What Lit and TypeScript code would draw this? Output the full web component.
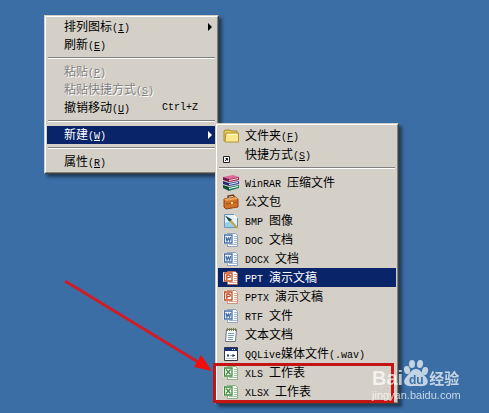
import { LitElement, html, css, svg, nothing } from "lit";
import { customElement } from "lit/decorators.js";
import { classMap } from "lit/directives/class-map.js";

interface Item {
  text: string;
  key?: string;
  shortcut?: string;
  icon?: string;
  disabled?: boolean;
  submenu?: boolean;
  selected?: boolean;
}
type Entry = Item | null;

const contextMenu: Entry[] = [
  { text: "排列图标", key: "I", submenu: true },
  { text: "刷新", key: "E" },
  null,
  { text: "粘贴", key: "P", disabled: true },
  { text: "粘贴快捷方式", key: "S", disabled: true },
  { text: "撤销移动", key: "U", shortcut: "Ctrl+Z" },
  null,
  { text: "新建", key: "W", submenu: true, selected: true },
  null,
  { text: "属性", key: "R" },
];

const newMenu: Entry[] = [
  { text: "文件夹", key: "F", icon: "folder" },
  { text: "快捷方式", key: "S", icon: "shortcut" },
  null,
  { text: "WinRAR 压缩文件", icon: "rar" },
  { text: "公文包", icon: "case" },
  { text: "BMP 图像", icon: "bmp" },
  { text: "DOC 文档", icon: "word" },
  { text: "DOCX 文档", icon: "word" },
  { text: "PPT 演示文稿", icon: "ppt", selected: true },
  { text: "PPTX 演示文稿", icon: "ppt" },
  { text: "RTF 文件", icon: "word" },
  { text: "文本文档", icon: "text" },
  { text: "QQLive媒体文件(.wav)", icon: "wav" },
  { text: "XLS 工作表", icon: "excel" },
  { text: "XLSX 工作表", icon: "excel" },
];

const office = (color: string, mark: string) => svg`
  <path d="M4.500 1.500h8l2 2v11h-10z" fill="#fff" stroke=${color} stroke-opacity=".55"/>
  <path d="M11 4.500h3M11 6.500h3M11 8.500h3M11 10.500h3M6 12.500h8" stroke=${color} stroke-opacity=".5"/>
  <path d="M.5 2.500h9v9h-9z" fill="#fff" stroke="#fff"/>
  <path d="M1.500 3h7.500v8H1.500z" fill="#fff" stroke=${color} stroke-width="1.300"/>
  <path d=${mark} fill="none" stroke=${color} stroke-width="1.300"/>`;

const icons: Record<string, unknown> = {
  folder: svg`
    <path d="M1 3l1-1h5l1 1h6v10H1z" fill="#e9c956" stroke="#a98a2c"/>
    <path d="M3 5h12.5v9H2z" fill="#fbe88e" stroke="#b3943a"/>
    <path d="M4 6.5h10" stroke="#fff8c8"/>`,
  shortcut: svg`
    <path d="M.5 9.5h6v6h-6z" fill="#fff" stroke="#222"/>
    <path d="M2 14l2.5-2.5M2.5 11.5h2v2" fill="none" stroke="#111"/>`,
  rar: svg`
    <path d="M0 2l10-2 6 2-10 2z" fill="#e0699a"/>
    <path d="M0 2l6 2v3L0 5z" fill="#7c1548"/><path d="M6 4l10-2v3L6 7z" fill="#a32059"/>
    <path d="M6 5.500l9-2" stroke="#f4e8e4"/>
    <path d="M0 6l6 2v3L0 9z" fill="#222d75"/><path d="M6 8l10-2v3L6 11z" fill="#384aa2"/>
    <path d="M6 9.500l9-2" stroke="#e5e8fa"/>
    <path d="M0 10l6 2v4l-6-3z" fill="#114d36"/><path d="M6 12l10-2v3L6 16z" fill="#238065"/>
    <path d="M6 13.500l9-2" stroke="#e7f7ed"/>`,
  case: svg`
    <path d="M5 4V2l5-1 1 1v2" fill="none" stroke="#7b3b10" stroke-width="1.5"/>
    <path d="M1 5l12-2 2 2v8L3 15l-2-2z" fill="#cf7127" stroke="#8d4515"/>
    <path d="M1 5l2 2 12-2-2-2z" fill="#eda45a"/>
    <path d="M3 10l12-2" stroke="#a6561d"/><path d="M8 8h2v2H8z" fill="#ffe07a"/>`,
  bmp: svg`
    <path d="M1.500 1.500h10l3 3v10h-13z" fill="#e4f3fb" stroke="#6c94bb"/>
    <path d="M2 10l5-2 7 5v1H2z" fill="#9bcdea"/>
    <path d="M11 1v4h4z" fill="#fff"/>
    <path d="M7 7l7 8" stroke="#c3a63c" stroke-width="2"/>
    <path d="M2 2.500l4 6 3-2z" fill="#1f4348"/>`,
  word: office("#456fa8", "M3 5l1 4 1.300-3 1.300 3 1-4"),
  ppt: office("#c04e25", "M3.800 10V5h2.200q1.300 0 1.300 1.300t-1.300 1.300H4"),
  excel: office("#3f8a3c", "M3 4.500l4.500 5M7.500 4.500l-4.500 5"),
  text: svg`
    <path d="M3.500 2.500h10l-1 12h-10z" fill="#f9fbfc" stroke="#687784"/>
    <path d="M5 6.500h6M5 8.500h6M5 10.500h5M5 12.500h5" stroke="#7b9ab8"/>
    <path d="M4.500 1v3M6.500 1v3M8.500 1v3M10.500 1v3M12.500 1v3" stroke="#7b7a45"/>`,
  wav: svg`
    <path d="M1.500 1.500h13v13h-13z" fill="#fff" stroke="#334"/>
    <path d="M2 2h12v3H2z" fill="#17337d"/><path d="M9 3.500h1M11 3.500h1" stroke="#fff"/>
    <path d="M4 9.500h2M5 8v3M7.500 9.500h1M10 8v3M9.500 9.500h2.500" stroke="#26365c"/>
    <path d="M3 12.500h10" stroke="#c4c8d4"/>`,
};

/* Latin runs use a half-width face so that they take half of a Chinese character. */
const runs = (text: string) =>
  text
    .split(/([\x20-\x7e]+)/)
    .filter(Boolean)
    .map((part) => (/^[\x20-\x7e]/.test(part) ? html`<span class="latin">${part}</span>` : part));

@customElement("popup-menu")
export class PopupMenu extends LitElement {
  static properties = { entries: { attribute: false }, icons: { type: Boolean, reflect: true } };
  declare entries: Entry[];
  declare icons: boolean;

  static styles = css`
    :host {
      display: block;
      box-sizing: border-box;
      padding: 1px;
      background: #d4d0c8;
      border: 1px solid;
      border-color: #d4d0c8 #404040 #404040 #d4d0c8;
      box-shadow: 3px 3px 3px rgba(0, 0, 0, 0.45);
      font: 12px/16px "Noto Sans CJK SC", sans-serif;
      color: #000;
    }
    .list {
      display: flex;
      flex-direction: column;
      padding: 1px;
      margin: -1px;
      border: 1px solid;
      border-color: #fff #808080 #808080 #fff;
    }
    .item {
      display: flex;
      align-items: center;
      height: 18px;
      margin: 0;
      padding: 0 4px 0 17px;
      border: 0;
      background: none;
      color: inherit;
      font: inherit;
      text-align: left;
      white-space: pre;
    }
    :host([icons]) .item {
      height: 19px;
      padding-left: 5px;
    }
    .icon {
      width: 16px;
      height: 16px;
      margin-right: 6px;
      flex: none;
    }
    .label {
      flex: 1;
      padding-bottom: 2px;
    }
    .shortcut {
      margin-right: 14px;
    }
    .latin {
      font: 10px/10px "Liberation Mono", monospace;
    }
    .arrow {
      width: 4px;
      height: 8px;
      fill: currentColor;
    }
    .disabled {
      color: #808080;
      text-shadow: 1px 1px #fff;
    }
    .selected {
      background: #0a246a;
      color: #fff;
    }
    .rule {
      box-sizing: border-box;
      width: auto;
      height: 2px;
      margin: 3px 1px 4px;
      border: 0;
      border-top: 1px solid #808080;
      border-bottom: 1px solid #fff;
    }
  `;

  render() {
    return html`<div class="list" role="menu">
      ${this.entries.map((e) =>
        e === null
          ? html`<hr class="rule" />`
          : html`<button
              class=${classMap({ item: true, disabled: !!e.disabled, selected: !!e.selected })}
              role="menuitem"
              ?disabled=${e.disabled}
            >
              ${e.icon
                ? html`<svg class="icon" viewBox="0 0 16 16" aria-hidden="true">${icons[e.icon]}</svg>`
                : nothing}<span class="label"
                >${runs(e.text)}${e.key ? html`<span class="latin">(<u>${e.key}</u>)</span>` : nothing}</span
              >${e.shortcut ? html`<span class="shortcut latin">${e.shortcut}</span>` : nothing}${e.submenu
                ? html`<svg class="arrow" viewBox="0 0 4 8" aria-hidden="true"><path d="M0 0l4 4-4 4z" /></svg>`
                : nothing}
            </button>`
      )}
    </div>`;
  }
}

@customElement("app-root")
export class AppRoot extends LitElement {
  static styles = css`
    :host {
      display: block;
      position: relative;
      min-height: 100vh;
      overflow: hidden;
      background: #3a6ea5;
    }
    .context {
      position: absolute;
      left: 44px;
      top: 15px;
      width: 175px;
    }
    .new {
      position: absolute;
      left: 215px;
      top: 123px;
      width: 184px;
    }
    .frame {
      position: absolute;
      left: 213px;
      top: 363px;
      box-sizing: border-box;
      width: 181px;
      height: 40px;
      border: 3px solid #c41414;
    }
    .pointer {
      position: absolute;
      left: 60px;
      top: 276px;
      width: 156px;
      height: 100px;
    }
    .mark {
      position: absolute;
      left: 372px;
      top: 358px;
      color: #fff;
      opacity: 0.7;
      font-family: "Liberation Sans", "Noto Sans CJK SC", sans-serif;
    }
    .brand {
      display: flex;
      align-items: flex-end;
      height: 30px;
      font-weight: bold;
      font-size: 20px;
      line-height: 20px;
    }
    .paw {
      width: 26px;
      height: 30px;
    }
    .cn {
      font: bold 15px/20px "Noto Sans CJK SC", sans-serif;
    }
    .site {
      font-size: 11px;
      line-height: 14px;
    }
    .du {
      font: bold 12px "Liberation Sans", sans-serif;
      fill: #3a6ea5;
    }
  `;

  render() {
    return html`
      <popup-menu class="context" .entries=${contextMenu}></popup-menu>
      <popup-menu class="new" icons .entries=${newMenu}></popup-menu>
      <div class="frame"></div>
      <svg class="pointer" viewBox="0 0 156 100" aria-hidden="true">
        <path d="M5 5L138 86" stroke="#d01c26" stroke-width="3" />
        <path d="M152 95l-18-4 7-12z" fill="#f20d0d" />
      </svg>
      <div class="mark">
        <div class="brand">
          <span>Bai</span>
          <svg class="paw" viewBox="0 0 26 30" fill="#fff">
            <ellipse cx="4" cy="12" rx="3" ry="4" transform="rotate(-12 4 12)" />
            <ellipse cx="9" cy="6" rx="3" ry="4" />
            <ellipse cx="17" cy="6" rx="3" ry="4" transform="rotate(10 17 6)" />
            <ellipse cx="22" cy="13" rx="3" ry="4" transform="rotate(12 22 13)" />
            <path d="M13 11c4 0 5 3 8 6s5 6 3 9-7 2-11 2-9 1-11-2 0-6 3-9 4-6 8-6z" />
            <text class="du" x="6" y="26">du</text>
          </svg>
          <span class="cn">经验</span>
        </div>
        <div class="site">jingyan.baidu.com</div>
      </div>
    `;
  }
}
